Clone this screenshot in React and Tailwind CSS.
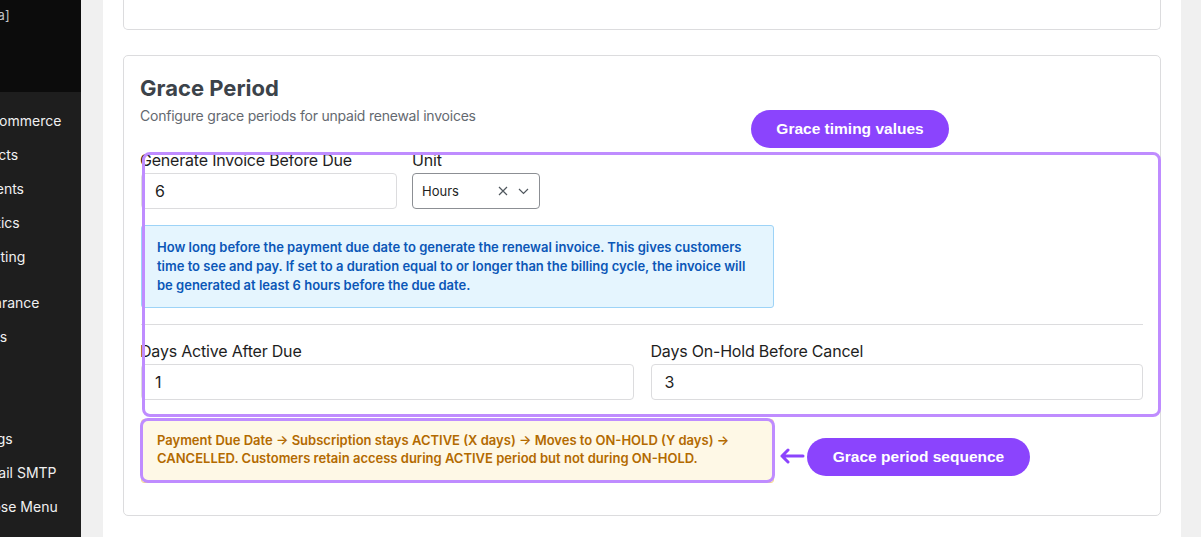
import React from 'react'

const menu = [
    { label: 'WooCommerce', gap: false },
    { label: 'Products', gap: false },
    { label: 'Payments', gap: false },
    { label: 'Analytics', gap: false },
    { label: 'Marketing', gap: false },
    { label: 'Appearance', gap: true },
    { label: 'Plugins', gap: false },
    { label: 'Users', gap: false },
    { label: 'Tools', gap: false },
    { label: 'Settings', gap: false },
    { label: 'WP Mail SMTP', gap: false },
    { label: 'Collapse Menu', gap: false },
]

function Sidebar() {
    return (
        <div className="w-[81px] shrink-0 overflow-hidden bg-[#1e1e1e] text-[14px] text-[#f0f0f1]">
            <div className="h-[92px] bg-[#0c0c0c] pt-[6px]">
                <div className="ml-[-27px] whitespace-nowrap text-[13px] leading-[18px] text-[#c3c4c7]">[beta]</div>
            </div>
            <div className="ml-[-41px] pt-[18px]">
                {menu.map((m) => (
                    <div key={m.label} className={`whitespace-nowrap leading-[22px] ${m.gap ? 'mt-[23.5px]' : 'mt-[12px] first:mt-0'}`}>
                        {m.label}
                    </div>
                ))}
            </div>
        </div>
    )
}

function TextInput({ value, className = '' }) {
    return (
        <div className={`flex h-[36px] items-center rounded-[4px] border border-[#dcdcde] bg-white px-[13px] text-[16px] text-[#1e1e1e] ${className}`}>
            {value}
        </div>
    )
}

function Badge({ children, className = '' }) {
    return (
        <div className={`absolute flex h-[38px] items-center justify-center rounded-full bg-[#8b44fd] text-[15.5px] font-bold text-white font-['Liberation_Sans',Arial,sans-serif] ${className}`}>
            {children}
        </div>
    )
}

export default function App() {
    return (
        <div className="flex h-[537px] w-[1201px] overflow-hidden bg-[#f0f0f0] font-['Inter',sans-serif]">
            <Sidebar />
            <div className="ml-[22px] mr-[20px] flex-1 bg-white px-[20px]">
                {/* card above, only its bottom visible */}
                <div className="h-[30px] rounded-b-[5px] border-x border-b border-[#dcdcde]" />

                <div className="relative mt-[25px] rounded-[5px] border border-[#dcdcde] px-[17px] pb-[32px] pt-[18px]">
                    <h2 className="ml-[-1px] text-[22px] font-bold leading-[28px] text-[#3c434a]">Grace Period</h2>
                    <p className="ml-[-1px] mt-[4px] text-[14px] leading-[20px] tracking-[-0.22px] text-[#646970]">Configure grace periods for unpaid renewal invoices</p>

                    <div className="mt-[23px] flex gap-[15px]">
                        <div className="w-[256px]">
                            <label className="ml-[-1px] block text-[16px] leading-[22px] tracking-[-0.2px] text-[#1e1e1e]">Generate Invoice Before Due</label>
                            <TextInput value="6" className="mt-[2px]" />
                        </div>
                        <div className="w-[128px]">
                            <label className="block text-[16px] leading-[22px] tracking-[-0.2px] text-[#1e1e1e]">Unit</label>
                            <div className="mt-[2px] flex h-[36px] items-center rounded-[4px] border border-[#8c8f94] bg-white pl-[9px] pr-[10px] text-[13px] text-[#1e1e1e]">
                                <span className="flex-1 pt-px">Hours</span>
                                <svg width="10" height="10" viewBox="0 0 10 10" className="mr-[10px]">
                                    <path d="M1 1 L9 9 M9 1 L1 9" stroke="#50575e" strokeWidth="1.2" fill="none" />
                                </svg>
                                <svg width="11" height="7" viewBox="0 0 11 7">
                                    <path d="M1 1 L5.5 5.5 L10 1" stroke="#50575e" strokeWidth="1.2" fill="none" />
                                </svg>
                            </div>
                        </div>
                    </div>

                    <div className="mt-[16px] w-[633px] rounded-[3px] border border-[#9dd3f7] bg-[#e5f5fe] px-[15px] py-[12px] text-[13px] font-semibold leading-[19px] text-[#0b57b7]">
                        How long before the payment due date to generate the renewal invoice. This gives customers time to see and pay. If set to a duration equal to or longer than the billing cycle, the invoice will be generated at least 6 hours before the due date.
                    </div>

                    <div className="mt-[16px] h-px bg-[#dcdcde]" />

                    <div className="mt-[15px] grid grid-cols-2 gap-[17px]">
                        <div>
                            <label className="ml-[-1px] block text-[16px] leading-[22px] tracking-[-0.2px] text-[#1e1e1e]">Days Active After Due</label>
                            <TextInput value="1" className="mt-[2px] h-[35px]" />
                        </div>
                        <div>
                            <label className="block text-[16px] leading-[22px] tracking-[-0.2px] text-[#1e1e1e]">Days On-Hold Before Cancel</label>
                            <TextInput value="3" className="mt-[2px] h-[35px]" />
                        </div>
                    </div>

                    <div className="mt-[19px] w-[633px] rounded-[3px] border border-[#f5d78a] bg-[#fef8e6] px-[15px] pb-[15px] pt-[11px] text-[13px] font-semibold leading-[18px] text-[#b36a00]">
                        Payment Due Date → Subscription stays ACTIVE (X days) → Moves to ON-HOLD (Y days) → CANCELLED. Customers retain access during ACTIVE period but not during ON-HOLD.
                    </div>

                    {/* annotation overlays */}
                    <div className="pointer-events-none absolute left-[18px] top-[96px] h-[265px] w-[1019px] rounded-[8px] border-[3px] border-[#bf8cff]" />
                    <div className="pointer-events-none absolute left-[16px] top-[362px] h-[65px] w-[635px] rounded-[8px] border-[3px] border-[#bf8cff]" />
                    <Badge className="left-[627px] top-[54px] w-[198px]">Grace timing values</Badge>
                    <Badge className="left-[683px] top-[382px] w-[223px]">Grace period sequence</Badge>
                    <svg className="absolute left-[655px] top-[392px]" width="26" height="16" viewBox="0 0 26 16">
                        <path d="M24 8 H3 M9 2 L3 8 L9 14" stroke="#8b44fd" strokeWidth="3" fill="none" strokeLinecap="round" strokeLinejoin="round" />
                    </svg>
                </div>
            </div>
        </div>
    )
}
